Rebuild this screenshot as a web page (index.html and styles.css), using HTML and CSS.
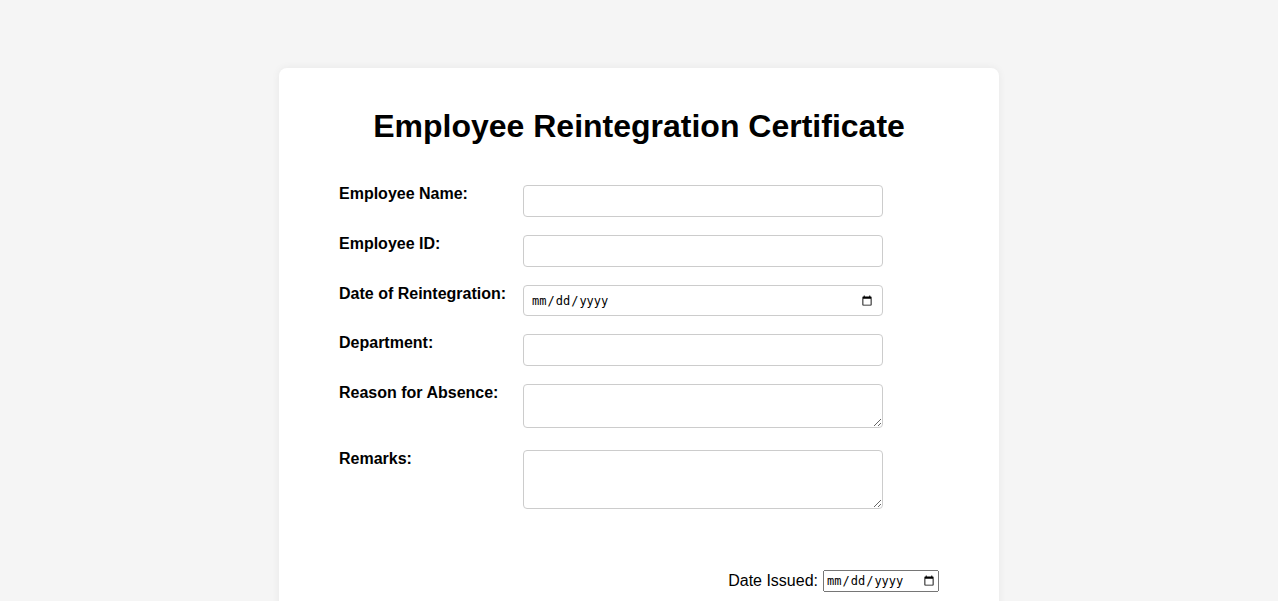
FILE: index.html
```html
<!DOCTYPE html>
<html lang="en">
<head>
<meta charset="utf-8">
<title>Employee Reintegration Certificate</title>
<link rel="stylesheet" href="styles.css">
</head>
<body>
<div class="card">
  <h1 class="title">Employee Reintegration Certificate</h1>
  <form class="form">
    <label class="label" for="name">Employee Name:</label>
    <input class="field" id="name" type="text">
    <label class="label" for="eid">Employee ID:</label>
    <input class="field" id="eid" type="text">
    <label class="label" for="date">Date of Reintegration:</label>
    <input class="field date" id="date" type="date">
    <label class="label" for="dept">Department:</label>
    <input class="field" id="dept" type="text">
    <label class="label" for="reason">Reason for Absence:</label>
    <textarea class="field area-sm" id="reason"></textarea>
    <label class="label spaced" for="remarks">Remarks:</label>
    <textarea class="field area-lg spaced" id="remarks"></textarea>
  </form>
  <div class="issued">
    <label class="issued-label" for="issued">Date Issued:</label>
    <input class="issued-input" id="issued" type="date">
  </div>
</div>
</body>
</html>
```
FILE: styles.css
```css
html, body {
  margin: 0;
  padding: 0;
}
body {
  background: #f5f5f5;
  font-family: "Liberation Sans", Arial, sans-serif;
  color: #000;
  padding-top: 68px;
}
.card {
  width: 600px;
  margin: 0 auto;
  background: #fff;
  border-radius: 8px;
  padding: 40px 60px 40px;
  box-shadow: 0 0 8px rgba(0,0,0,0.06);
}
.title {
  margin: 0 0 40px;
  text-align: center;
  font-size: 32px;
  font-weight: bold;
  line-height: 37px;
}
.form {
  display: grid;
  grid-template-columns: 184px 360px;
  row-gap: 18px;
  align-items: start;
}
.label {
  font-size: 16px;
  font-weight: bold;
  line-height: 18px;
}
.field {
  box-sizing: border-box;
  width: 360px;
  height: 32px;
  margin: 0;
  border: 1px solid #ccc;
  border-radius: 4px;
  padding: 6px 8px;
  font-size: 13.33px;
  background: #fff;
}
.date {
  height: 31px;
  font-size: 12px;
  padding: 6px 7px;
}
.area-sm {
  height: 44px;
}
.area-lg {
  height: 59px;
}
.spaced {
  margin-top: 4px;
}
.issued {
  display: flex;
  justify-content: flex-end;
  align-items: center;
  gap: 5px;
  margin-top: 61px;
}
.issued-label {
  font-size: 16px;
}
.issued-input {
  margin: 0;
  width: 116px;
  height: 22px;
  box-sizing: border-box;
  font-size: 12px;
}
```
